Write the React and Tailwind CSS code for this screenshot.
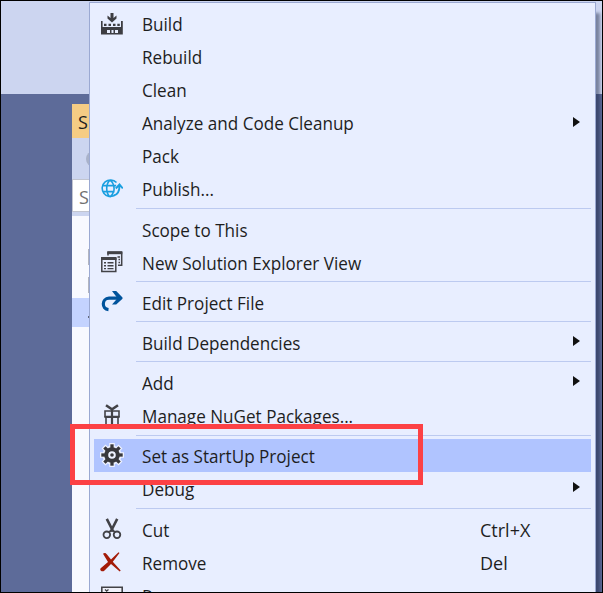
import React from "react";

function BuildIcon() {
  return (
    <svg width="22" height="22" viewBox="0 0 22 22" fill="#3d3d42" className="-mt-[2px]">
      <path d="M9.5 0h3v5l3-2.6v3.2L11 9.4 6.5 5.600V2.400l3 2.600z" />
      <path d="M0 8h1.600v6H20V8h1.800v13.500H0z" />
      <path d="M3 10.700h2.500v2.300H3zM7.500 10.700H10v2.300H7.500zM12 10.700h2.500v2.300H12zM16.300 10.700h2.500v2.300h-2.500z" />
      <path d="M6 17h3v3H6zM10.500 17h2v3h-2zM14 17h3v3h-3z" fill="#e8eeff" />
    </svg>
  );
}

function PublishIcon() {
  return (
    <svg width="22" height="20" viewBox="0 0 22 20" fill="none" stroke="#1a9fe0" strokeWidth="1.6" className="-mt-[2px]">
      <path d="M15.500 3.500A8.300 8.300 0 1 0 14 16.200M1.600 6.600h13.500M1.600 12.600h12M9 1.200C4.600 5 4.600 14 9 18M9 1.200c3.600 2.800 4.600 6.800 3.800 11M9 18c1.600-1.200 2.800-2.800 3.400-5" />
      <path d="M12.500 16.700c4.200-1 6-4.500 6-10M14.800 9.500L18.500 5.500l3.300 4" strokeWidth="1.900" />
    </svg>
  );
}

function WindowsIcon() {
  return (
    <svg width="22" height="22" viewBox="0 0 22 22" fill="none" stroke="#424247" className="-mt-[1px]">
      <path d="M7 4.500V1.500h13.700v12.800H17" strokeWidth="1.500" />
      <path d="M6.300 1.700h15" strokeWidth="3" />
      <path d="M16.500 6h2.500M17.500 8.500h1.500M17.500 11.500h1.500" strokeWidth="1.400" />
      <path d="M.8 7.500h14v13H.8z" strokeWidth="1.500" />
      <path d="M0 7.500h15.500" strokeWidth="3" />
      <path d="M3 11.800h2M6.500 11.800h6M3 14.700h2M6.500 14.700h6M3 17.600h2M6.500 17.600h6" strokeWidth="1.400" />
    </svg>
  );
}

function RedoIcon() {
  return (
    <svg width="22" height="21" viewBox="0 0 22 21" fill="none" className="-mt-[3px]">
      <path d="M7.500 18.700C.500 18 .500 7.500 8 7.200h10" stroke="#00539c" strokeWidth="3.200" />
      <path d="M11 0h4.200l6.300 6.500v1.300l-6.300 5.700H11l5.500-6.300z" fill="#00539c" />
    </svg>
  );
}

function GiftIcon() {
  return (
    <svg width="22" height="22" viewBox="0 0 22 22" fill="none" stroke="#424247" className="-mt-[2px]">
      <path d="M5 1.200l5.500 3.800M17 1.200l-5.500 3.800" strokeWidth="2.600" />
      <path d="M4 7h14v5.500H4zM5 12.500v9M17 12.500v9" strokeWidth="1.600" />
      <path d="M11 4v18M3.500 13h15" strokeWidth="2.200" />
    </svg>
  );
}

function GearIcon() {
  const teeth = [0, 45, 90, 135, 180, 225, 270, 315];
  return (
    <svg width="24" height="24" viewBox="0 0 24 24" fill="none" className="-mt-px">
      <circle cx="12" cy="12" r="9.500" fill="#eef2ff" />
      <g stroke="#eef2ff" strokeWidth="5.500">
        {teeth.map((a) => (
          <path key={a} d="M12 0v6" transform={`rotate(${a} 12 12)`} />
        ))}
      </g>
      <g stroke="#38383c">
        <circle cx="12" cy="12" r="5.800" strokeWidth="4" />
        {teeth.map((a) => (
          <path key={a} d="M12 1.300v4" strokeWidth="3.300" transform={`rotate(${a} 12 12)`} />
        ))}
      </g>
      <circle cx="12" cy="12" r="1.800" fill="#38383c" />
    </svg>
  );
}

function CutIcon() {
  return (
    <svg width="20" height="22" viewBox="0 0 20 22" fill="none" stroke="#424247" className="-mt-[1px]">
      <path d="M4.800.8l6.400 12.700M15.200.8L8.800 13.500" strokeWidth="2.600" />
      <circle cx="4.800" cy="16.800" r="3.300" strokeWidth="1.800" />
      <circle cx="15" cy="16.800" r="3.300" strokeWidth="1.800" />
      <path d="M7 14l3-2 3 2" strokeWidth="1.800" />
    </svg>
  );
}

function RemoveIcon() {
  return (
    <svg width="21" height="20" viewBox="0 0 21 20" fill="#a31b08" className="-ml-[3px] -mt-[1px]">
      <path d="M3 1.800C4.500.500 6 1 7 2.600L11 7.500 18.500.300l1 .8L12.800 9.700 20.700 18.500l-1 .9L11 12 4.500 18.500C2.500 20.500-1 18.500.700 16.300L8 9.900z" />
    </svg>
  );
}

function RenameIcon() {
  return (
    <svg width="22" height="20" viewBox="0 0 22 20" fill="none" stroke="#424247">
      <path d="M.8 1.300h20.400v17H.8z" strokeWidth="1.600" fill="#f0f1fa" />
      <path d="M4 3.500l3.500 3M7.500 3.500L4 6.500" strokeWidth="1.300" />
    </svg>
  );
}

const groups = [
  [
    { label: "Build", icon: <BuildIcon /> },
    { label: "Rebuild" },
    { label: "Clean" },
    { label: "Analyze and Code Cleanup", submenu: true },
    { label: "Pack" },
    { label: "Publish...", icon: <PublishIcon /> },
  ],
  [{ label: "Scope to This" }, { label: "New Solution Explorer View", icon: <WindowsIcon /> }],
  [{ label: "Edit Project File", icon: <RedoIcon /> }],
  [{ label: "Build Dependencies", submenu: true }],
  [
    { label: "Add", submenu: true },
    { label: "Manage NuGet Packages...", icon: <GiftIcon /> },
  ],
  [
    { label: "Set as StartUp Project", icon: <GearIcon />, active: true },
    { label: "Debug", submenu: true },
  ],
  [
    { label: "Cut", icon: <CutIcon />, shortcut: "Ctrl+X" },
    { label: "Remove", icon: <RemoveIcon />, shortcut: "Del" },
    { label: "Rename", icon: <RenameIcon /> },
  ],
];

function MenuItem({ item, first }) {
  const pad = first ? "pt-0" : "pt-[2px]";
  return (
    <div className={`flex h-[33px] shrink-0 items-center ${item.active ? "bg-[#b0c4ff]" : ""}`}>
      <div className="flex w-9 shrink-0 justify-center">{item.icon}</div>
      <span
        className={`ml-3 w-[338px] shrink-0 origin-left scale-x-[0.95] whitespace-nowrap leading-[33px] ${pad}`}
      >
        {item.label}
      </span>
      <span className={`w-[93px] shrink-0 leading-[33px] ${pad}`}>{item.shortcut}</span>
      {item.submenu && (
        <svg width="7" height="10" viewBox="0 0 7 10" fill="#111" className="-mt-[3px]">
          <path d="M0 0l7 5-7 5z" />
        </svg>
      )}
    </div>
  );
}

export default function App() {
  return (
    <div className="relative h-[593px] w-[603px] overflow-hidden border border-black bg-[#5d6b99] font-['Open_Sans','Noto_Sans',sans-serif] text-[18px] text-[#1e1e1e]">
      <div className="h-[93px] bg-[#ccd5f0]" />
      <div className="ml-[71px] mt-[10px] flex h-[490px] w-[40px] flex-col bg-[#f8f9ff]">
        <div className="h-[34px] shrink-0 bg-[#f5cc84] pl-[6px] leading-[36px]">S</div>
        <div className="flex h-[41px] shrink-0 items-center bg-[#ccd5f0] pl-[14px]">
          <div className="size-4 rounded-full bg-[#a9b2ca]" />
        </div>
        <div className="h-[33px] shrink-0 border border-[#c2c5d0] bg-white pl-[6px] leading-[34px] text-[#717171]">S</div>
        <div className="h-[4px] shrink-0 bg-[#ccd5f0]" />
        <div className="mt-[33px] ml-4 h-4 w-3 shrink-0 bg-[#b3b5c0]" />
        <div className="mt-3 ml-4 h-4 w-3 shrink-0 bg-[#b3b5c0]" />
        <div className="mt-[5px] h-[29px] shrink-0 bg-[#c4d3ff] pl-4 pt-[18px]">
          <div className="h-[2px] w-3 bg-[#62677a]" />
        </div>
      </div>

      <div className="absolute left-[88px] top-[1px] flex h-[610px] w-[507px] flex-col border border-[#9ba9d2] bg-[#e8eeff] px-[4px] pt-[5px] shadow-[5px_10px_3px_-1px_rgba(20,30,60,0.45)]">
        {groups.map((group, g) => (
          <React.Fragment key={g}>
            {g > 0 && (
              <div className={`shrink-0 pl-[42px] ${g === 6 ? "h-2 pt-[3px]" : g === 5 ? "h-[7px] pt-[3px]" : "h-[7px] pt-[2px]"}`}>
                <div className="h-px bg-[#bccaf0]" />
              </div>
            )}
            {group.map((item) => (
              <MenuItem key={item.label} item={item} first={g === 0} />
            ))}
          </React.Fragment>
        ))}
      </div>

      <div className="absolute left-[69px] top-[423px] h-[61px] w-[353px] border-[5px] border-[#fc4145]" />
    </div>
  );
}
